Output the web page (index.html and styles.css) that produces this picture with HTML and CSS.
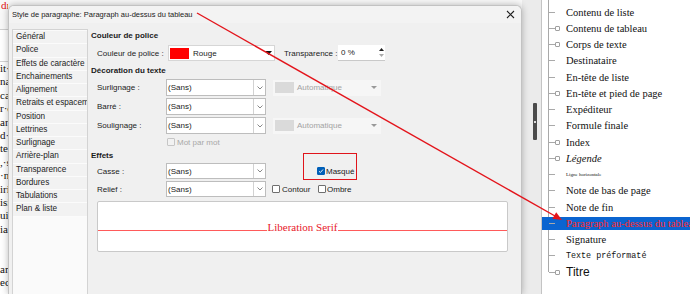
FILE: index.html
```html
<!DOCTYPE html>
<html lang="fr">
<head>
<meta charset="utf-8">
<title>Style de paragraphe</title>
<link rel="stylesheet" href="styles.css">
</head>
<body>
<div class="desk">
  <div class="doc">
    <div class="doc-top"><span class="doc-red">dı</span></div>
    <div class="doc-band"></div>
    <div class="doc-text">
      <p>it·</p><p>na</p><p>cas</p><p>r·c</p><p>an</p><p>d·g</p><p>te</p><p>,·s</p><p>·n</p><p>iri</p><p>isi</p><p>uis</p><p>ia</p><p></p><p></p><p>am</p><p>ec</p>
    </div>
  </div>
  <div class="deck"><div class="thumb"><span class="dot"></span></div></div>
  <div class="styles">
    <ul class="tree">
      <li><span class="lbl">Contenu de liste</span></li>
      <li><span class="box"></span><span class="lbl">Contenu de tableau</span></li>
      <li><span class="box"></span><span class="lbl">Corps de texte</span></li>
      <li><span class="lbl">Destinataire</span></li>
      <li><span class="lbl">En-tête de liste</span></li>
      <li><span class="box"></span><span class="lbl">En-tête et pied de page</span></li>
      <li><span class="lbl">Expéditeur</span></li>
      <li><span class="lbl">Formule finale</span></li>
      <li><span class="box"></span><span class="lbl">Index</span></li>
      <li><span class="box"></span><span class="lbl ital">Légende</span></li>
      <li><span class="lbl tiny">Ligne horizontale</span></li>
      <li><span class="lbl">Note de bas de page</span></li>
      <li><span class="lbl">Note de fin</span></li>
      <li class="selected"><span class="lbl red">Paragraph au-dessus du tableau</span></li>
      <li><span class="lbl">Signature</span></li>
      <li><span class="lbl mono">Texte préformaté</span></li>
      <li><span class="box"></span><span class="lbl sans">Titre</span></li>
    </ul>
  </div>
</div>

<div class="dialog">
  <div class="titlebar">
    <span class="title">Style de paragraphe: Paragraph au-dessus du tableau</span>
    <svg class="close" width="9" height="9" viewBox="0 0 9 9"><path d="M1 1L8 8M8 1L1 8" stroke="#222" stroke-width="1.1" fill="none"/></svg>
  </div>
  <div class="body">
    <div class="nav">
      <div class="item">Général</div>
      <div class="item">Police</div>
      <div class="item">Effets de caractère</div>
      <div class="item">Enchainements</div>
      <div class="item">Alignement</div>
      <div class="item">Retraits et espacement</div>
      <div class="item">Position</div>
      <div class="item">Lettrines</div>
      <div class="item">Surlignage</div>
      <div class="item">Arrière-plan</div>
      <div class="item">Transparence</div>
      <div class="item">Bordures</div>
      <div class="item">Tabulations</div>
      <div class="item">Plan &amp; liste</div>
    </div>
    <div class="content">
      <div class="h h1">Couleur de police</div>
      <div class="row r1">
        <span class="lab lab-color">Couleur de police :</span>
        <div class="csel"><span class="swatch"></span><span>Rouge</span>
          <svg class="tri" width="7" height="4" viewBox="0 0 7 4"><path d="M0 0H7L3.5 4Z" fill="#111"/></svg></div>
        <span class="lab lab-tr">Transparence :</span>
        <div class="spin"><span class="spin-v">0 %</span>
          <span class="spin-b">
            <svg width="5" height="3" viewBox="0 0 5 3"><path d="M0 3H5L2.5 0Z" fill="#222"/></svg>
            <svg width="5" height="3" viewBox="0 0 5 3"><path d="M0 0H5L2.5 3Z" fill="#aaa"/></svg>
          </span></div>
      </div>
      <div class="h h2">Décoration du texte</div>
      <div class="row r2">
        <span class="lab">Surlignage :</span>
        <div class="sel"><span class="v">(Sans)</span><span class="btn"><svg width="6" height="4" viewBox="0 0 6 4"><path d="M0.5 0.5L3 3L5.5 0.5" stroke="#888" fill="none"/></svg></span></div>
        <div class="auto"><span class="aswatch"></span><span>Automatique</span><svg class="tri" width="6" height="3" viewBox="0 0 6 3"><path d="M0 0H6L3 3Z" fill="#999"/></svg></div>
      </div>
      <div class="row r3">
        <span class="lab">Barré :</span>
        <div class="sel"><span class="v">(Sans)</span><span class="btn"><svg width="6" height="4" viewBox="0 0 6 4"><path d="M0.5 0.5L3 3L5.5 0.5" stroke="#888" fill="none"/></svg></span></div>
      </div>
      <div class="row r3">
        <span class="lab">Soulignage :</span>
        <div class="sel"><span class="v">(Sans)</span><span class="btn"><svg width="6" height="4" viewBox="0 0 6 4"><path d="M0.5 0.5L3 3L5.5 0.5" stroke="#888" fill="none"/></svg></span></div>
        <div class="auto"><span class="aswatch"></span><span>Automatique</span><svg class="tri" width="6" height="3" viewBox="0 0 6 3"><path d="M0 0H6L3 3Z" fill="#999"/></svg></div>
      </div>
      <div class="row rmot">
        <span class="cb cb-dis"></span><span class="dis">Mot par mot</span>
      </div>
      <div class="h h3">Effets</div>
      <div class="row r4">
        <span class="lab">Casse :</span>
        <div class="sel"><span class="v">(Sans)</span><span class="btn"><svg width="6" height="4" viewBox="0 0 6 4"><path d="M0.5 0.5L3 3L5.5 0.5" stroke="#888" fill="none"/></svg></span></div>
        <span class="cb cb-on masque"><svg width="6" height="6" viewBox="0 0 6 6"><path d="M1 3.2L2.4 4.5L5 1.5" stroke="#fff" stroke-width="0.9" fill="none"/></svg></span><span class="cbl">Masqué</span>
      </div>
      <div class="row r5">
        <span class="lab">Relief :</span>
        <div class="sel"><span class="v">(Sans)</span><span class="btn"><svg width="6" height="4" viewBox="0 0 6 4"><path d="M0.5 0.5L3 3L5.5 0.5" stroke="#888" fill="none"/></svg></span></div>
        <span class="cb contour"></span><span class="cbl cbl-contour">Contour</span>
        <span class="cb"></span><span class="cbl">Ombre</span>
      </div>
      <div class="preview">
        <div class="pv"><span class="pv-line"></span><span class="pv-text">Liberation Serif</span><span class="pv-line"></span></div>
      </div>
    </div>
  </div>
  <div class="mark"></div>
</div>

<svg class="arrow" width="690" height="294" viewBox="0 0 690 294">
  <line x1="197" y1="13" x2="555" y2="216" stroke="#e3141b" stroke-width="1.4"/>
  <path d="M562 220L552.4 218.8L556.2 212.2Z" fill="#e3141b"/>
</svg>
</body>
</html>
```

FILE: styles.css
```css
* { box-sizing: border-box; }

body {
  margin: 0;
  width: 690px;
  height: 294px;
  overflow: hidden;
  position: relative;
  background: #fff;
  font-family: "Liberation Sans", Arial, sans-serif;
  font-size: 8px;
  color: #1b1b1b;
}

/* background window */
.desk { display: flex; height: 294px; }

.doc { width: 522px; flex: none; background: #fff; }
.doc-top {
  height: 30px;
  background: #f8f8f8;
  border-bottom: 1px solid #cfcfcf;
  font-family: "Liberation Serif", serif;
  font-size: 11px;
  line-height: 11px;
  color: #e01010;
  padding-left: 1px;
}
.doc-red { display: inline-block; width: 7px; overflow: hidden; white-space: nowrap; vertical-align: top; }
.doc-band { height: 32px; border-bottom: 1px solid #d4d4d4; }
.doc-text {
  width: 8px;
  overflow: hidden;
  font-family: "Liberation Serif", serif;
  font-size: 11px;
  line-height: 13.4px;
  color: #111;
}
.doc-text p { margin: 0; height: 13.4px; white-space: nowrap; }

.deck {
  width: 20px;
  flex: none;
  background: #ebebeb;
  border-right: 1px solid #c4c4c4;
  padding-top: 103px;
}
.thumb {
  margin-left: 11px;
  width: 4px;
  height: 37px;
  background: #4b4b4b;
  border-radius: 1px;
  display: flex;
  align-items: center;
  justify-content: center;
}
.dot { width: 2px; height: 2px; background: #ddd; }

.styles { flex: 1; background: #fff; overflow: hidden; }
.tree {
  list-style: none;
  margin: 0;
  padding: 4px 0 0;
  height: 294px;
  background: linear-gradient(#a9a9a9, #a9a9a9) no-repeat 6px 0 / 1px 272px;
}
.tree li {
  height: 16.25px;
  display: flex;
  align-items: center;
  padding-left: 7px;
  font-family: "Liberation Serif", serif;
  font-size: 10.5px;
  color: #111;
  white-space: nowrap;
}
.tree li::before {
  content: "";
  flex: none;
  width: 6px;
  height: 1px;
  background: #a9a9a9;
}
.box {
  flex: none;
  width: 5px;
  height: 5px;
  border: 1px solid #a0a0a0;
  border-radius: 1px;
}
.lbl { margin-left: 11px; }
.box + .lbl { margin-left: 6px; }
.ital { font-style: italic; }
.tiny { font-size: 5px; }
.mono { font-family: "Liberation Mono", monospace; font-size: 8.4px; }
.sans { font-family: "Liberation Sans", sans-serif; font-size: 12px; }
.tree li.selected {
  background: linear-gradient(#0a64d0, #0a64d0) no-repeat 0 1.5px / 100% 13px;
}
.red { color: #ff2a2a; }

/* dialog */
.dialog {
  position: absolute;
  left: 8px;
  top: 5px;
  width: 514px;
  height: 289px;
  overflow: hidden;
  background: #f0f0f0;
  border: 1px solid #c2c2c2;
  border-bottom: 0;
  border-radius: 6px 6px 0 0;
  box-shadow: 0 0 7px rgba(0, 0, 0, 0.28);
}
.titlebar {
  height: 17px;
  display: flex;
  align-items: center;
  justify-content: space-between;
  padding: 0 6px 0 3px;
  background: #f3f3f3;
}
.title { font-size: 7.5px; color: #1b1b1b; }
.close { display: block; }

.body { display: flex; padding: 6px 0 0 3px; }

.nav {
  width: 76px;
  height: 266px;
  flex: none;
  border: 1px solid #d3d3d3;
  border-bottom: 0;
  background: #fafafa;
  padding-top: 1px;
}
.item {
  height: 13.25px;
  line-height: 12.5px;
  padding-left: 3px;
  background: #f2f2f2;
  border-bottom: 1px solid #fbfbfb;
  white-space: nowrap;
  overflow: hidden;
  font-size: 8.2px;
}

.content { flex: 1; padding-left: 3px; }
.h { font-weight: bold; height: 12px; line-height: 12px; }
.h1 { margin-top: 1px; }
.h2 { margin-top: 4px; }
.h3 { margin-top: 2px; }

.row { display: flex; align-items: center; margin-left: 6px; }
.lab { flex: none; width: 69px; white-space: nowrap; }
.r1 { margin-top: 3px; height: 16px; }
.r2 { margin-top: 2px; height: 17px; }
.r3 { margin-top: 2px; height: 17px; }
.rmot { margin-top: 2px; height: 12px; padding-left: 70px; }
.r4 { margin-top: 1px; height: 16px; }
.r5 { margin-top: 2px; height: 16px; }

.lab-color { width: 71px; }
.lab-tr { width: 54px; margin-left: 9px; }

.csel {
  width: 107px;
  height: 16px;
  background: #fff;
  border: 1px solid #d6d6d6;
  display: flex;
  align-items: center;
  padding: 0 2px 0 1px;
}
.swatch { width: 19px; height: 11px; background: #f00; margin-right: 4px; flex: none; }
.tri { margin-left: auto; display: block; }

.spin {
  width: 47px;
  height: 16px;
  background: #fff;
  border-bottom: 1px solid #c9c9c9;
  display: flex;
  align-items: center;
}
.spin-v { flex: 1; padding-left: 3px; }
.spin-b {
  width: 8px;
  height: 100%;
  display: flex;
  flex-direction: column;
  align-items: center;
  justify-content: center;
  gap: 3px;
}
.spin-b svg { display: block; }

.sel {
  width: 100px;
  height: 100%;
  background: #fff;
  border: 1px solid #bdbdbd;
  display: flex;
  align-items: center;
}
.sel .v { flex: 1; padding-left: 1px; }
.sel .btn {
  width: 12px;
  height: 100%;
  border-left: 1px solid #d2d2d2;
  display: flex;
  align-items: center;
  justify-content: center;
}
.sel .btn svg { display: block; }

.auto {
  width: 108px;
  height: 16px;
  margin-left: 7px;
  background: #f6f6f6;
  color: #a3a3a3;
  display: flex;
  align-items: center;
  padding: 0 4px 0 2px;
}
.aswatch { width: 19px; height: 11px; background: #dadada; margin-right: 3px; flex: none; }

.cb {
  flex: none;
  width: 8px;
  height: 8px;
  border: 1px solid #6f6f6f;
  border-radius: 1px;
  background: #fff;
  display: flex;
  align-items: center;
  justify-content: center;
}
.cb svg { display: block; }
.cb-dis { border-color: #c6c6c6; background: #f2f2f2; }
.dis { color: #a8a8a8; margin-left: 2px; }
.cb-on { background: #005fb8; border-color: #005fb8; }
.masque { margin-left: 51px; }
.contour { margin-left: 6px; }
.cbl { margin-left: 1px; white-space: nowrap; }
.cbl-contour { width: 36px; margin-left: 2px; }

.preview {
  margin: 4px 13px 0 6px;
  height: 51px;
  background: #fff;
  border: 1px solid #c9c9c9;
  border-radius: 2px;
  padding-top: 20px;
}
.pv { display: flex; align-items: flex-start; height: 12px; }
.pv-line { flex: 1; height: 1px; margin-top: 8px; background: #ff5a5a; }
.pv-text {
  font-family: "Liberation Serif", serif;
  font-size: 11px;
  line-height: 11px;
  color: #e8202a;
  padding: 0 1px;
}

.mark {
  position: absolute;
  left: 294px;
  top: 147px;
  width: 54px;
  height: 27px;
  border: 1.5px solid #e0141b;
}

.arrow { position: absolute; left: 0; top: 0; pointer-events: none; }
```
